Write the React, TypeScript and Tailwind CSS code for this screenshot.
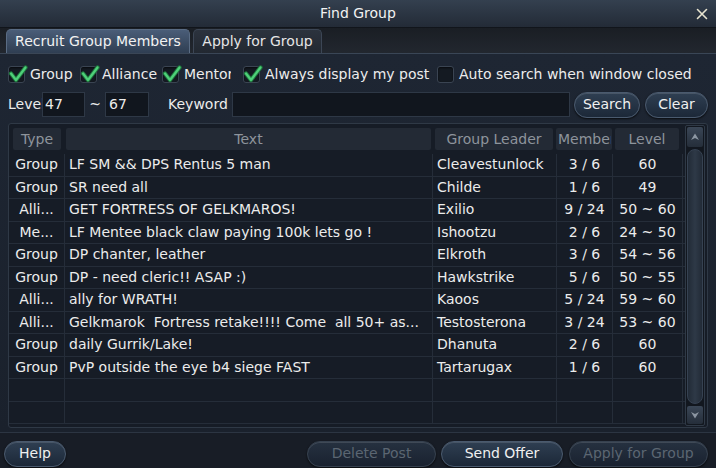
import React from "react";

const rows = [
  ["Group", "LF SM && DPS Rentus 5 man", "Cleavestunlock", "3 / 6", "60"],
  ["Group", "SR need all", "Childe", "1 / 6", "49"],
  ["Alli...", "GET FORTRESS OF GELKMAROS!", "Exilio", "9 / 24", "50 ~ 60"],
  ["Me...", "LF Mentee black claw paying 100k lets go !", "Ishootzu", "2 / 6", "24 ~ 50"],
  ["Group", "DP chanter, leather", "Elkroth", "3 / 6", "54 ~ 56"],
  ["Group", "DP - need cleric!! ASAP :)", "Hawkstrike", "5 / 6", "50 ~ 55"],
  ["Alli...", "ally for WRATH!", "Kaoos", "5 / 24", "59 ~ 60"],
  ["Alli...", "Gelkmarok  Fortress retake!!!! Come  all 50+ as...", "Testosterona", "3 / 24", "53 ~ 60"],
  ["Group", "daily Gurrik/Lake!", "Dhanuta", "2 / 6", "60"],
  ["Group", "PvP outside the eye b4 siege FAST", "Tartarugax", "1 / 6", "60"],
  ["", "", "", "", ""],
  ["", "", "", "", ""],
];

function Check({ checked }: { checked: boolean }) {
  return (
    <span className="relative flex h-[17px] w-[17px] shrink-0 items-center justify-center rounded-[3px] border border-[#3a4452] bg-[#141a22] shadow-[inset_0_1px_2px_rgba(0,0,0,0.6)]">
      {checked && (
        <svg width="20" height="18" viewBox="0 0 20 18" className="absolute left-[-1px] top-[-2px]">
          <path d="M3 8.5 L8 15 L17.5 2.5" fill="none" stroke="#1f7a3e" strokeWidth="4.2" strokeLinecap="round" strokeLinejoin="round" />
          <path d="M3 8.5 L8 15 L17.5 2.5" fill="none" stroke="#4fd07a" strokeWidth="2.2" strokeLinecap="round" strokeLinejoin="round" />
        </svg>
      )}
    </span>
  );
}

function Btn({ children, w, disabled }: { children: React.ReactNode; w: string; disabled?: boolean }) {
  return (
    <div
      className={`flex h-[26px] items-center justify-center rounded-full border bg-gradient-to-b shadow-[inset_0_1px_0_rgba(255,255,255,0.12),0_1px_2px_rgba(0,0,0,0.7)] ${w} ${
        disabled
          ? "border-[#36414f] from-[#263140] to-[#1a2230] text-[#5b6672]"
          : "border-[#4a5a6e] from-[#2f3f52] to-[#1c2838] text-[#f0f0f0]"
      }`}
    >
      {children}
    </div>
  );
}

export default function App() {
  return (
    <div
      className="flex h-[468px] w-[716px] flex-col overflow-hidden bg-[#1b212b] text-[14px] text-[#ececec]"
      style={{ fontFamily: "'DejaVu Sans', sans-serif" }}
    >
      {/* Title bar */}
      <div className="flex h-[28px] items-center border-b border-[#11151b] bg-gradient-to-b from-[#34404f] to-[#232b37]">
        <div className="w-[28px]" />
        <div className="flex-1 text-center text-[#f2f2f2]">Find Group</div>
        <div className="flex w-[28px] items-center justify-center">
          <svg width="12" height="12" viewBox="0 0 12 12">
            <path d="M1.5 1.5 L10.5 10.5 M10.5 1.5 L1.5 10.5" stroke="#e8e4d0" strokeWidth="1.6" strokeLinecap="round" />
          </svg>
        </div>
      </div>

      {/* Tabs */}
      <div className="flex h-[26px] items-end gap-[3px] border-b border-[#3a4656] bg-gradient-to-b from-[#1a1e24] to-[#22272f] pl-[6px]">
        <div className="flex h-[24px] w-[184px] items-center justify-center rounded-t-[5px] border border-b-0 border-[#5a6c84] bg-gradient-to-b from-[#4a5d78] to-[#2f3e52] text-[#f2f2f2]">
          Recruit Group Members
        </div>
        <div className="flex h-[24px] w-[129px] items-center justify-center rounded-t-[5px] border border-b-0 border-[#3c4655] bg-gradient-to-b from-[#2c333e] to-[#222831] text-[#e6e6e6]">
          Apply for Group
        </div>
      </div>

      {/* Content */}
      <div className="flex flex-1 flex-col bg-gradient-to-b from-[#1e2633] to-[#1a212c] px-[8px]">
        {/* Checkbox row */}
        <div className="mt-[10px] flex h-[20px] items-center">
          <Check checked />
          <span className="ml-[5px] w-[50px]">Group</span>
          <Check checked />
          <span className="ml-[5px] w-[60px] overflow-hidden whitespace-nowrap">Alliance</span>
          <Check checked />
          <span className="ml-[5px] mr-[12px] w-[47px] overflow-hidden whitespace-nowrap">Mentor</span>
          <Check checked />
          <span className="ml-[5px] w-[172px] whitespace-nowrap">Always display my post</span>
          <Check checked={false} />
          <span className="ml-[5px] whitespace-nowrap">Auto search when window closed</span>
        </div>

        {/* Level row */}
        <div className="mt-[8px] flex h-[25px] items-center">
          <span className="w-[34px] overflow-hidden whitespace-nowrap">Level</span>
          <div className="flex h-[25px] w-[43px] items-center border border-[#2e3846] bg-[#11161e] pl-[2px]">47</div>
          <span className="w-[20px] text-center">~</span>
          <div className="flex h-[25px] w-[44px] items-center border border-[#2e3846] bg-[#11161e] pl-[3px]">67</div>
          <span className="ml-[19px] w-[64px]">Keyword</span>
          <div className="h-[25px] w-[338px] border border-[#2e3846] bg-[#11161e]" />
          <div className="ml-[4px]">
            <Btn w="w-[66px]">Search</Btn>
          </div>
          <div className="ml-[5px]">
            <Btn w="w-[63px]">Clear</Btn>
          </div>
        </div>

        {/* Table */}
        <div className="mt-[6px] flex h-[305px] rounded-[3px] border border-[#2f3946] bg-[#161c26]">
          <div className="flex flex-1 flex-col overflow-hidden">
            {/* Header */}
            <div className="flex h-[30px] shrink-0 items-center">
              <div className="ml-[4px] flex h-[22px] w-[48px] items-center justify-center rounded-[2px] bg-[#232a35] text-[#8e949c]">Type</div>
              <div className="ml-[5px] flex h-[22px] w-[365px] items-center justify-center rounded-[2px] bg-[#232a35] text-[#8e949c]">Text</div>
              <div className="ml-[4px] flex h-[22px] w-[118px] items-center justify-center rounded-[2px] bg-[#232a35] text-[#8e949c]">Group Leader</div>
              <div className="ml-[3px] flex h-[22px] w-[56px] items-center rounded-[2px] bg-[#232a35] pl-[2px] text-[#8e949c]">
                <span className="w-[53px] overflow-hidden whitespace-nowrap">Members</span>
              </div>
              <div className="ml-[3px] flex h-[22px] w-[64px] items-center justify-center rounded-[2px] bg-[#232a35] text-[#8e949c]">Level</div>
            </div>
            {/* Rows */}
            {rows.map((r, i) => (
              <div key={i} className="flex h-[22.5px] shrink-0 items-center whitespace-pre border-b border-[#252d39]">
                <div className="flex h-full w-[56px] items-center justify-center border-r border-[#252d39]">{r[0]}</div>
                <div className="flex h-full w-[368px] items-center overflow-hidden border-r border-[#252d39] pl-[4px]">{r[1]}</div>
                <div className="flex h-full w-[124px] items-center border-r border-[#252d39] pl-[4px]">{r[2]}</div>
                <div className="flex h-full w-[56px] items-center justify-center border-r border-[#252d39]">{r[3]}</div>
                <div className="flex h-full w-[70px] items-center justify-center border-r border-[#252d39]">{r[4]}</div>
              </div>
            ))}
          </div>
          {/* Scrollbar */}
          <div className="my-[1px] mr-[2px] flex w-[20px] flex-col rounded-[2px] border border-[#2f3946] bg-[#12171f] p-[1px]">
            <div className="flex h-[20px] items-center justify-center rounded-[2px] bg-gradient-to-b from-[#3a4656] to-[#252e3a]">
              <svg width="10" height="10" viewBox="0 0 10 10">
                <path d="M5 1.5 L9 8 L5 6 L1 8 Z" fill="#8c96a2" />
              </svg>
            </div>
            <div className="my-[2px] flex-1 rounded-full border border-[#364252] bg-gradient-to-r from-[#222b37] via-[#2e3947] to-[#222b37]" />
            <div className="flex h-[18px] items-center justify-center rounded-[2px] bg-gradient-to-b from-[#3a4656] to-[#252e3a]">
              <svg width="10" height="10" viewBox="0 0 10 10">
                <path d="M5 8.5 L9 2 L5 4 L1 2 Z" fill="#8c96a2" />
              </svg>
            </div>
          </div>
        </div>
      </div>

      {/* Bottom bar */}
      <div className="flex h-[36px] items-center border-t border-[#2c3542] bg-[#181d26] px-[4px] pt-[6px]">
        <Btn w="w-[62px]">Help</Btn>
        <div className="ml-[241px]">
          <Btn w="w-[129px]" disabled>
            Delete Post
          </Btn>
        </div>
        <div className="ml-[5px]">
          <Btn w="w-[122px]">Send Offer</Btn>
        </div>
        <div className="ml-[6px]">
          <Btn w="w-[139px]" disabled>
            Apply for Group
          </Btn>
        </div>
      </div>
    </div>
  );
}
